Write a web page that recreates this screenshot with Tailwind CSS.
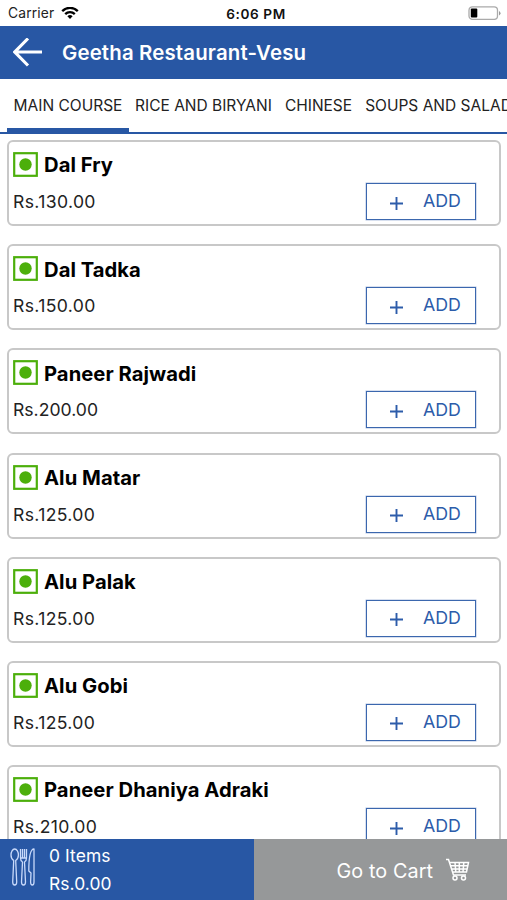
<!DOCTYPE html>
<html lang="en">
<head>
<meta charset="utf-8">
<title>Geetha Restaurant-Vesu</title>
<script src="https://cdn.jsdelivr.net/npm/@tailwindcss/browser@4"></script>
</head>
<body class="h-[900px] w-[507px] overflow-hidden bg-white font-['Inter','Liberation_Sans',sans-serif] text-black">
<div class="flex h-[900px] flex-col overflow-hidden">
  <div class="grid h-[26px] shrink-0 grid-cols-3 items-center pr-[6px] pl-2 text-[13.8px] leading-none">
    <div class="flex items-center gap-[7px] pt-px">
      <span class="pt-px tracking-[0.15px] text-[#222]">Carrier</span>
      <svg class="h-3 w-[18px]" viewBox="0 0 18 12" fill="none" stroke="#000" stroke-width="2.3"><path d="M1.2 4.1a11 11 0 0 1 15.6 0M4.2 7.1a6.8 6.8 0 0 1 9.6 0"/><path d="M9 12 6.4 9.3a3.7 3.7 0 0 1 5.2 0Z" fill="#000" stroke="none"/></svg>
    </div>
    <span class="pt-[3px] pl-[3px] text-center text-[13.6px] font-semibold tracking-[0.6px] text-[#111]">6:06 PM</span>
    <svg class="h-[14px] w-[33px] justify-self-end" viewBox="0 0 33 14"><rect x="1" y=".8" width="28.5" height="12.6" rx="3.4" fill="#fff" stroke="#aaa" stroke-width="1.3"/><rect x="2.8" y="2.5" width="6.5" height="9" rx="1" fill="#000"/><path d="M31 5v4.5q1.5-.7 1.5-2.2T31 5" fill="#999"/></svg>
  </div>
  <header class="flex h-[53px] shrink-0 items-center bg-[#2857a4] pl-[13px] text-white">
    <svg class="h-[30px] w-[30px]" viewBox="0 0 30 30" fill="none" stroke="#fff" stroke-width="3.1"><path d="M15 .5 1.800 14 15 27.500M2 14h27"/></svg>
    <h1 class="pt-[2px] pl-[19px] text-[20.4px] font-semibold tracking-[0.16px]">Geetha Restaurant-Vesu</h1>
  </header>
  <nav class="flex h-[55px] shrink-0 overflow-hidden border-b-[2px] border-[#2857a4] pl-[7px] text-[15.5px] whitespace-nowrap text-[#222]">
    <div class="flex w-[122px] shrink-0 items-center justify-center border-b-[4px] border-[#2857a4] pt-[5px]"><span>MAIN COURSE</span></div>
    <div class="flex shrink-0 items-center gap-[13px] pt-px pl-[6px]"><span>RICE AND BIRYANI</span><span>CHINESE</span><span>SOUPS AND SALADS</span></div>
  </nav>
  <main id="list" class="flex min-h-0 flex-1 flex-col gap-[18.2px] overflow-hidden pr-[6px] pl-[7px] pt-[6px]"></main>
  <footer class="grid h-[61px] shrink-0 grid-cols-2 text-white">
    <div class="flex bg-[#2857a4] pl-[10px]">
      <svg class="mt-[8px] h-[40px] w-[26px]" viewBox="0 0 26 40" fill="none" stroke="#c9dafb" stroke-width="1.300" stroke-linejoin="round"><path d="M4.700 2C2.500 2 1 5 1 8c0 3 1.200 4.500 2.700 5.500L2.700 35q0 3 2 3t2-3L5.700 13.500C7.200 12.500 8.400 11 8.400 8c0-3-1.500-6-3.700-6ZM10.500 2v9q0 3 2 4l-1 20q0 3 2 3t2-3l-1-20q2-1 2-4V2M12.500 2v9M14.500 2v9M10.500 11h6M24 2v33q0 3-1.700 3t-1.700-3l.4-9-2.200-2C18.800 14 20 2 24 2Z"/></svg>
      <div class="pt-[3px] pl-[13px] text-[17.400px] leading-[28px] tracking-[0.1px]"><div>0 Items</div><div>Rs.0.00</div></div>
    </div>
    <div class="flex items-center bg-[#969899] pl-[83px] text-[19.800px]">
      <span class="w-[97px] whitespace-nowrap pt-[4px] tracking-[0.1px]">Go to Cart</span>
      <svg class="ml-[11px] h-[24px] w-[25px]" viewBox="0 0 25 24" fill="none" stroke="#fff" stroke-width="1.500"><path d="M1 1.500h2.500L8.500 17H21M5 4.500h18.500L21.500 14H7.500M6 7.700h17M6.800 11H22M10 4.500l.8 9.500M14.300 4.500V14M18.800 4.500 18 14"/><circle cx="10" cy="20" r="2"/><circle cx="18.500" cy="20" r="2"/></svg>
    </div>
  </footer>
</div>
<template id="card">
  <article class="flex h-[86px] shrink-0 flex-col rounded-[6px] border-2 border-[#c8c8c8] pl-[4px]">
    <div class="mt-[10px] flex h-[25px] items-center">
      <svg class="h-[25px] w-[25px]" viewBox="0 0 25 25"><rect x="1.200" y="1.200" width="22.600" height="22.600" fill="#fff" stroke="#4caf0b" stroke-width="2.200"/><circle cx="12.500" cy="12.500" r="6.200" fill="#4caf0b"/></svg>
      <h2 class="pt-[2px] pl-[6px] text-[20.200px] font-bold tracking-[0.05px] whitespace-nowrap"></h2>
    </div>
    <div class="flex justify-between pt-[6px] pr-[23px]">
      <p class="pt-[7px] text-[17.600px] leading-[24px] text-[#222]"></p>
      <button class="flex h-[37px] w-[110px] items-center border border-[#3b67ae] pl-[23px] text-[#2d5caa] shadow-[0_0_0_0.5px_#3b67ae66]">
        <svg class="mt-[3px] h-[13px] w-[13px]" viewBox="0 0 13 13" stroke="#2d5caa" stroke-width="1.900"><path d="M6.500 0v13M0 6.500h13"/></svg>
        <span class="pl-[20px] text-[17.800px]">ADD</span>
      </button>
    </div>
  </article>
</template>
<script>
const dishes = [["Dal Fry","130"],["Dal Tadka","150"],["Paneer Rajwadi","200"],["Alu Matar","125"],["Alu Palak","125"],["Alu Gobi","125"],["Paneer Dhaniya Adraki","210"]];
const list = document.getElementById("list"), card = document.getElementById("card");
for (const [name, price] of dishes) {
  const item = card.content.cloneNode(true);
  item.querySelector("h2").textContent = name;
  const label = item.querySelector("p");
  label.textContent = "Rs." + price + ".00";
  if (price.includes("1")) label.classList.add("tracking-[0.35px]");
  list.append(item);
}
</script>
</body>
</html>
